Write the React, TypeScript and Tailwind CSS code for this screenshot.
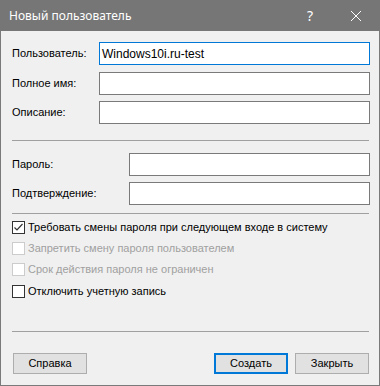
import React from "react";

function Field({ label, labelW, value, focused, mt }: { label: string; labelW: string; value?: string; focused?: boolean; mt: string }) {
  return (
    <div className={`flex items-center ${mt}`}>
      <div className={`${labelW} shrink-0 leading-none`}>{label}</div>
      <div
        className={`flex-1 h-[23px] bg-white flex items-center px-[2px] ${
          focused ? "border border-[#0078d7]" : "border border-[#7a7a7a]"
        }`}
      >
        {value && <span className="text-[12px] leading-none">{value}</span>}
      </div>
    </div>
  );
}

function Check({ label, checked, disabled, mt }: { label: string; checked?: boolean; disabled?: boolean; mt: string }) {
  return (
    <div className={`flex items-center h-[14px] ${mt}`}>
      <div
        className={`w-[13px] h-[13px] shrink-0 bg-white border flex items-center justify-center ${
          disabled ? "border-[#cccccc]" : "border-[#333333]"
        }`}
      >
        {checked && (
          <svg width="11" height="11" viewBox="0 0 11 11">
            <polyline points="1.5,5.5 4,8 9.5,2" fill="none" stroke="#333" strokeWidth="1.2" />
          </svg>
        )}
      </div>
      <span className={`ml-[3px] leading-none ${disabled ? "text-[#a0a0a0]" : "text-black"}`}>{label}</span>
    </div>
  );
}

export default function App() {
  return (
    <div className="w-[380px] h-[386px] bg-[#f0f0f0] border-x border-b border-[#7a7a7a] flex flex-col font-['Liberation_Sans',Arial,sans-serif] text-[11px] text-black">
      <div className="h-[31px] -mx-px bg-[#767676] flex items-center shrink-0">
        <span className="ml-[9px] text-white text-[12px] font-['Noto_Sans',sans-serif] leading-none">Новый пользователь</span>
        <span className="ml-auto text-white text-[14px] font-['Noto_Sans',sans-serif] leading-none mr-[37px]">?</span>
        <svg width="12" height="12" viewBox="0 0 12 12" className="mr-[18px]">
          <path d="M1 1 L11 11 M11 1 L1 11" stroke="white" strokeWidth="1" />
        </svg>
      </div>
      <div className="flex flex-col pl-[11px] pr-[9px] pt-[11px] flex-1">
        <Field label="Пользователь:" labelW="w-[87px]" value="Windows10i.ru-test" focused mt="mt-0" />
        <Field label="Полное имя:" labelW="w-[87px]" mt="mt-[7px]" />
        <Field label="Описание:" labelW="w-[87px]" mt="mt-[6px]" />
        <div className="h-px bg-[#a0a0a0] mt-[16px] mr-px" />
        <Field label="Пароль:" labelW="w-[117px]" mt="mt-[12px]" />
        <Field label="Подтверждение:" labelW="w-[117px]" mt="mt-[6px]" />
        <div className="h-px bg-[#a0a0a0] mt-[8px] mr-px" />
        <Check label="Требовать смены пароля при следующем входе в систему" checked mt="mt-[6px]" />
        <Check label="Запретить смену пароля пользователем" disabled mt="mt-[7px]" />
        <Check label="Срок действия пароля не ограничен" disabled mt="mt-[7px]" />
        <Check label="Отключить учетную запись" mt="mt-[8px]" />
        <div className="h-px bg-[#a0a0a0] mt-[33px] mr-px" />
        <div className="flex mt-[21px] mr-px">
          <button className="w-[74px] h-[21px] ml-px bg-[#e1e1e1] border border-[#adadad] leading-none">Справка</button>
          <button className="w-[74px] h-[21px] ml-auto bg-[#e1e1e1] border-2 border-[#0078d7] leading-none">Создать</button>
          <button className="w-[74px] h-[21px] ml-[7px] bg-[#e1e1e1] border border-[#adadad] leading-none">Закрыть</button>
        </div>
      </div>
    </div>
  );
}
